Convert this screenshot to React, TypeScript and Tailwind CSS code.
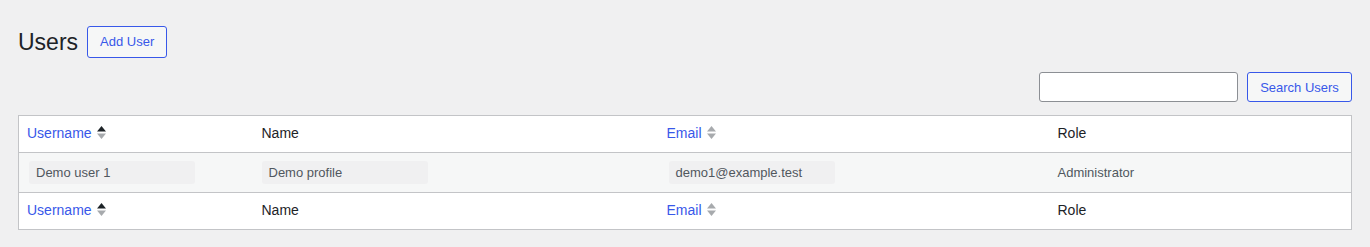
import React from "react";

function SortIcon({ active }: { active?: boolean }) {
  return (
    <svg width="11" height="15" viewBox="0 0 11 15" className="inline-block ml-[4px] -mt-[2px] align-middle">
      <polygon points="1,6.5 5.5,1 10,6.5" fill={active ? "#1d2327" : "#a7aaad"} />
      <polygon points="1,8.5 10,8.5 5.5,14" fill="#a7aaad" />
    </svg>
  );
}

function HeadRow() {
  return (
    <tr className="h-[37px] text-[14px]">
      <th className="text-left font-normal pl-2 pb-[2px]">
        <span className="text-[#3858e9]">Username</span>
        <SortIcon active />
      </th>
      <th className="text-left font-normal pl-2 pb-[2px] text-[#1d2327]">Name</th>
      <th className="text-left font-normal pl-2 pb-[2px]">
        <span className="text-[#3858e9]">Email</span>
        <SortIcon />
      </th>
      <th className="text-left font-normal pl-2 pb-[2px] text-[#1d2327]">Role</th>
    </tr>
  );
}

function Pill({ children }: { children: React.ReactNode }) {
  return (
    <div className="w-[166px] h-[23px] rounded-[3px] bg-[#f0f0f1] pl-[7px] flex items-center text-[13px] text-[#50575e]">
      {children}
    </div>
  );
}

export default function App() {
  return (
    <div className="min-h-[247px] bg-[#f0f0f1] px-[18px] pt-[26px] font-['Liberation_Sans',Arial,sans-serif] text-[#1d2327]">
      <div className="flex items-center gap-[9px]">
        <h1 className="text-[23px] leading-[30px] font-normal">Users</h1>
        <button className="h-[32px] px-[12px] border border-[#3858e9] rounded-[3px] text-[13px] text-[#3858e9] bg-[#f6f7f7]">
          Add User
        </button>
      </div>
      <div className="flex justify-end gap-[9px] mt-[14px]">
        <input className="w-[199px] h-[30px] bg-white border border-[#8c8f94] rounded-[3px]" />
        <button className="h-[30px] w-[105px] pt-[2px] border border-[#3858e9] rounded-[3px] text-[13px] text-[#3858e9] bg-[#f6f7f7]">
          Search Users
        </button>
      </div>
      <table className="w-full table-fixed mt-[13px] bg-white border border-[#c3c4c7] border-collapse">
        <colgroup>
          <col className="w-[235px]" />
          <col className="w-[405px]" />
          <col className="w-[391px]" />
          <col />
        </colgroup>
        <thead className="border-b border-[#c3c4c7]">
          <HeadRow />
        </thead>
        <tbody>
          <tr className="h-[40px] bg-[#f6f7f7] border-b border-[#c3c4c7]">
            <td className="pl-[10px]"><Pill>Demo user 1</Pill></td>
            <td className="pl-[8px]"><Pill>Demo profile</Pill></td>
            <td className="pl-[10px]"><Pill>demo1@example.test</Pill></td>
            <td className="pl-2 text-[13px] text-[#50575e]">Administrator</td>
          </tr>
        </tbody>
        <tfoot>
          <HeadRow />
        </tfoot>
      </table>
    </div>
  );
}
